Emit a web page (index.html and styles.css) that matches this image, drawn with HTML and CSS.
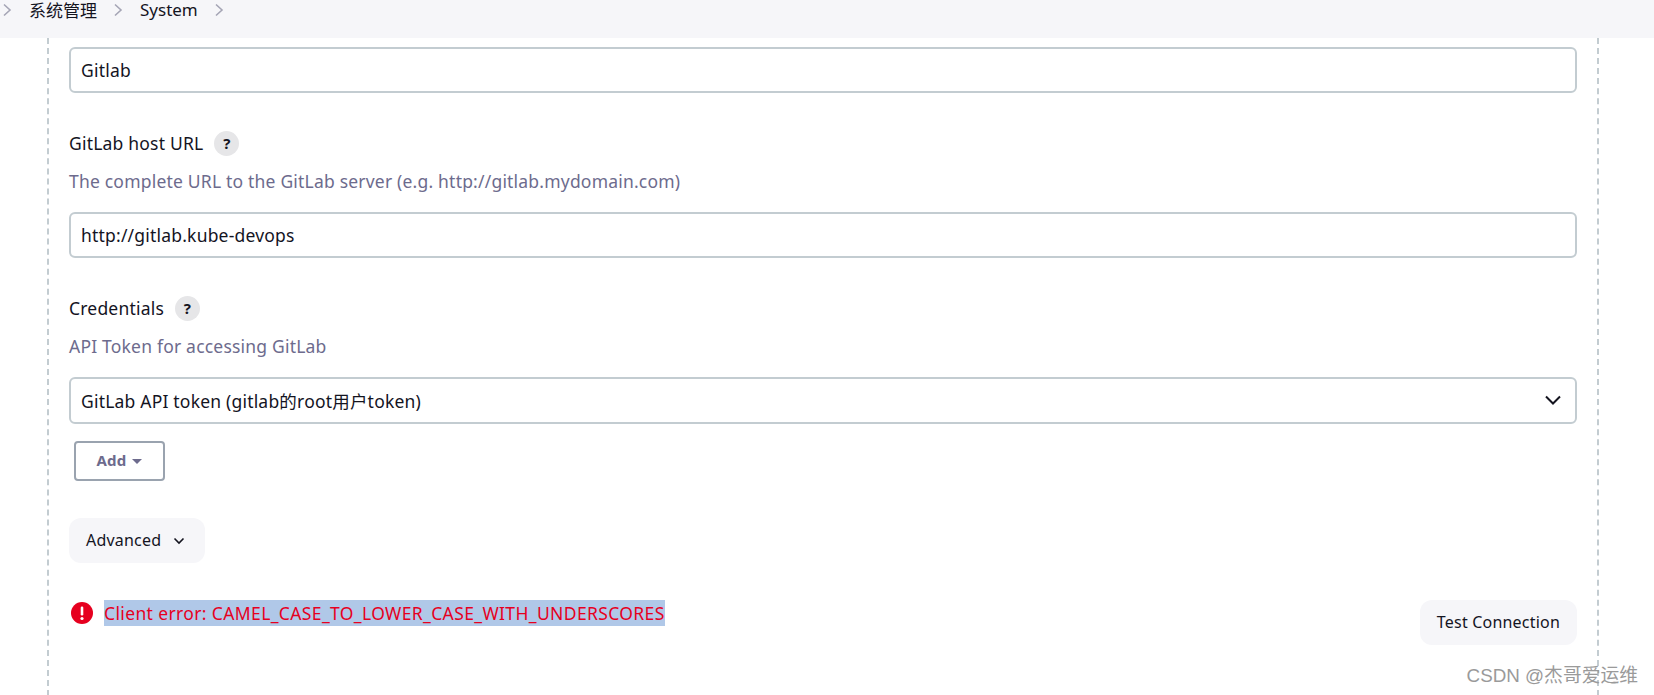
FILE: index.html
```html
<!DOCTYPE html>
<html lang="en">
<head>
    <meta charset="UTF-8">
    <title>System - GitLab</title>
    <link rel="stylesheet" href="styles.css">
</head>
<body>
    <nav class="breadcrumbs">
        <svg class="crumb-sep first" viewBox="0 0 10 16" fill="none"><path d="M2 2.500l6 5.500-6 5.500"/></svg>
        <a class="crumb">系统管理</a>
        <svg class="crumb-sep" viewBox="0 0 10 16" fill="none"><path d="M2 2.500l6 5.500-6 5.500"/></svg>
        <a class="crumb">System</a>
        <svg class="crumb-sep" viewBox="0 0 10 16" fill="none"><path d="M2 2.500l6 5.500-6 5.500"/></svg>
    </nav>

    <main class="repeated-chunk">
        <input class="field first-field" type="text" value="Gitlab">

        <div class="setting">
            <div class="setting-name">
                <span>GitLab host URL</span>
                <span class="help-icon">?</span>
            </div>
            <p class="setting-desc">The complete URL to the GitLab server (e.g. http://gitlab.mydomain.com)</p>
            <input class="field" type="text" value="http://gitlab.kube-devops">
        </div>

        <div class="setting">
            <div class="setting-name">
                <span>Credentials</span>
                <span class="help-icon">?</span>
            </div>
            <p class="setting-desc">API Token for accessing GitLab</p>
            <div class="field select-field">
                <span>GitLab API token (gitlab的root用户token)</span>
                <svg class="select-arrow" viewBox="0 0 16 10" fill="none"><path d="M1 1.500l7 7 7-7"/></svg>
            </div>
            <button class="add-button" type="button">Add <span class="caret"></span></button>
        </div>

        <button class="soft-button advanced" type="button">
            Advanced
            <svg class="advanced-arrow" viewBox="0 0 12 8" fill="none"><path d="M1.500 1.500L6 6l4.500-4.500"/></svg>
        </button>

        <div class="validation-row">
            <div class="error">
                <svg class="error-icon" viewBox="0 0 22 22"><circle cx="11" cy="11" r="11"/><rect x="9.700" y="4.500" width="2.600" height="9" rx="1.200"/><circle cx="11" cy="16.500" r="1.600"/></svg>
                <span class="error-text">Client error: CAMEL_CASE_TO_LOWER_CASE_WITH_UNDERSCORES</span>
            </div>
            <button class="soft-button test-connection" type="button">Test Connection</button>
        </div>
    </main>

    <div class="watermark">CSDN @杰哥爱运维</div>
</body>
</html>
```

FILE: styles.css
```css
html, body {
    height: 100%;
}

body {
    margin: 0;
    overflow: hidden;
    position: relative;
    font-family: "Noto Sans", "Noto Sans CJK SC", sans-serif;
    font-size: 17.5px;
    letter-spacing: 0.2px;
    color: #14141f;
    background-color: white;
}

.breadcrumbs {
    height: 38px;
    box-sizing: border-box;
    padding-bottom: 19px;
    display: flex;
    align-items: center;
    background-color: #f6f6f9;
    font-size: 17px;
    letter-spacing: 0;
}

.crumb-sep {
    width: 10px;
    height: 16px;
    margin: 0 17px 0 16px;
}

.crumb-sep.first {
    margin-left: 2px;
}

.crumb-sep path {
    stroke: #a5a5b5;
    stroke-width: 1.6;
}

.repeated-chunk {
    margin: 0 55px 0 47px;
    padding: 9px 20px 0 20px;
    min-height: 658px;
    box-sizing: border-box;
    border-left: 2px dashed #c3ccd1;
    border-right: 2px dashed #c3ccd1;
}

.field {
    display: block;
    width: 100%;
    height: 46px;
    box-sizing: border-box;
    padding: 0 10px 1px;
    border: 2px solid #c3ccd1;
    border-radius: 6px;
    font: inherit;
    letter-spacing: inherit;
    color: inherit;
    outline: none;
}

.setting {
    margin-top: 37px;
}

.setting-name {
    display: flex;
    align-items: center;
    gap: 11px;
    height: 26px;
}

.help-icon {
    width: 25px;
    height: 25px;
    border-radius: 50%;
    background-color: #e6e6e8;
    display: flex;
    align-items: center;
    justify-content: center;
    font-size: 15px;
    font-weight: 700;
}

.setting-desc {
    margin: 13px 0 19px;
    line-height: 24px;
    color: #6d6b8d;
}

.select-field {
    height: 47px;
    display: flex;
    align-items: center;
    justify-content: space-between;
}

.select-arrow {
    width: 16px;
    height: 10px;
    margin-right: 4px;
}

.select-arrow path {
    stroke: #14141f;
    stroke-width: 2;
}

.add-button {
    display: flex;
    align-items: center;
    justify-content: center;
    gap: 6px;
    width: 91px;
    height: 40px;
    padding: 0 0 2px;
    margin: 17px 0 0 5px;
    background: white;
    border: 2px solid #9aa3af;
    border-radius: 4px;
    font: inherit;
    font-size: 15px;
    font-weight: 700;
    letter-spacing: 0.2px;
    color: #6d6b8d;
}

.caret {
    width: 0;
    height: 0;
    margin-top: 2px;
    border: 5px solid transparent;
    border-top: 5px solid #6d6b8d;
    border-bottom: 0;
}

.soft-button {
    display: flex;
    align-items: center;
    gap: 12px;
    height: 45px;
    padding: 0 17px 2px;
    background-color: #f6f6f9;
    border: none;
    border-radius: 12px;
    font: inherit;
    font-size: 16px;
    letter-spacing: 0.2px;
    color: inherit;
}

.advanced {
    margin-top: 37px;
    width: 136px;
}

.advanced-arrow {
    width: 12px;
    height: 8px;
    margin-top: 2px;
}

.advanced-arrow path {
    stroke: #14141f;
    stroke-width: 1.6;
}

.validation-row {
    margin-top: 37px;
    display: flex;
    justify-content: space-between;
    align-items: flex-start;
}

.error {
    display: flex;
    align-items: center;
    gap: 11px;
    padding-left: 2px;
    color: #e6001f;
}

.error-icon {
    width: 22px;
    height: 22px;
    fill: #e6001f;
}

.error-icon rect, .error-icon circle + rect + circle {
    fill: white;
}

.error-text {
    background-color: #b0c8e8;
    line-height: 26px;
    letter-spacing: 0.37px;
}

.watermark {
    position: absolute;
    right: 16px;
    bottom: 8px;
    font-family: "Liberation Sans", "Noto Sans CJK SC", sans-serif;
    font-size: 18.800px;
    letter-spacing: 0;
    color: #9a9a9a;
}
```
